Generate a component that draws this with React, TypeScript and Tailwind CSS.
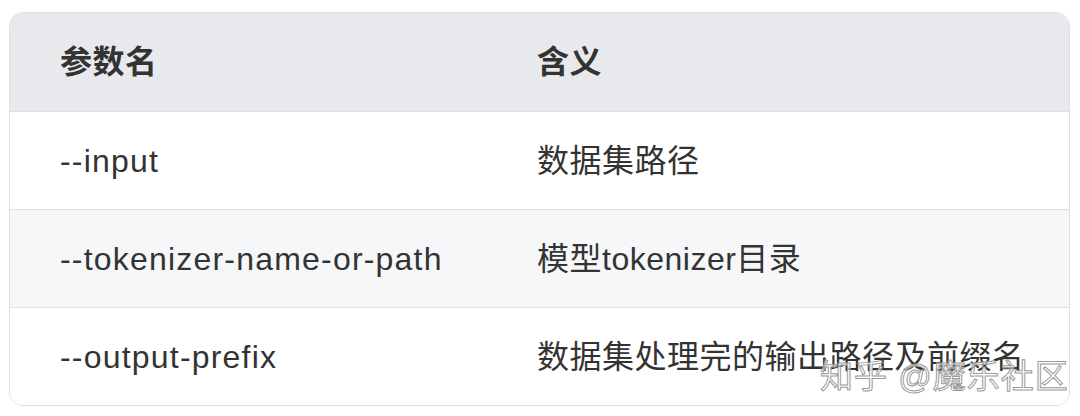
const rows = [
  { name: '--input', desc: '数据集路径' },
  { name: '--tokenizer-name-or-path', desc: '模型tokenizer目录' },
  { name: '--output-prefix', desc: '数据集处理完的输出路径及前缀名' },
];

export default function App() {
  return (
    <div
      className="relative w-[1080px] h-[416px] bg-white pt-[12px] pl-[9px] text-[#333333] text-[32px] tracking-[0.5px]"
      style={{ fontFamily: '"Liberation Sans", "Noto Sans CJK SC", sans-serif' }}
    >
      <div className="w-[1061px] border border-[#dedfe2] rounded-[14px] overflow-hidden">
        <div className="flex h-[98px] items-center bg-[#e8e9ec] font-bold">
          <div className="w-[477px] pl-[50px]">参数名</div>
          <div className="flex-1 pl-[50px]">含义</div>
        </div>
        {rows.map((r, i) => (
          <div
            key={r.name}
            className={`flex h-[98px] items-center border-t border-[#dedfe2] ${i % 2 === 1 ? 'bg-[#f6f7f9]' : 'bg-white'}`}
          >
            <div className="w-[477px] pl-[50px] tracking-[1.2px]">{r.name}</div>
            <div className="flex-1 pl-[50px]">{r.desc}</div>
          </div>
        ))}
      </div>
      <div className="absolute left-[820px] top-[352px] text-[33px] tracking-[1px] text-white/60 [-webkit-text-stroke:1px_#9a9a9a]">
        知乎 @魔乐社区
      </div>
    </div>
  );
}
